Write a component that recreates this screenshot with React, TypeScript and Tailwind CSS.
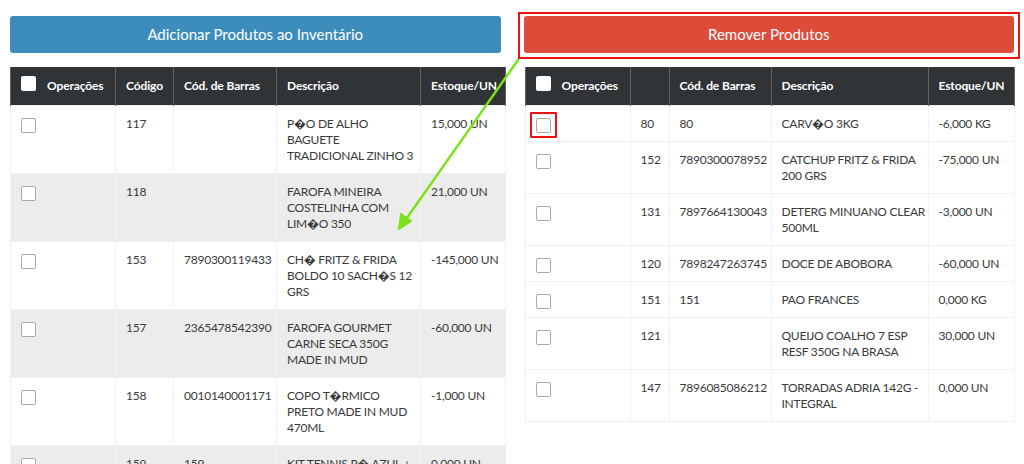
import React from 'react';

type Row = {
  codigo: string;
  barras: string;
  descricao: string[];
  estoque: string;
};

const inventario: Row[] = [
  { codigo: '117', barras: '', descricao: ['P�O DE ALHO', 'BAGUETE', 'TRADICIONAL ZINHO 3'], estoque: '15,000 UN' },
  { codigo: '118', barras: '', descricao: ['FAROFA MINEIRA', 'COSTELINHA COM', 'LIM�O 350'], estoque: '21,000 UN' },
  { codigo: '153', barras: '7890300119433', descricao: ['CH� FRITZ & FRIDA', 'BOLDO 10 SACH�S 12', 'GRS'], estoque: '-145,000 UN' },
  { codigo: '157', barras: '2365478542390', descricao: ['FAROFA GOURMET', 'CARNE SECA 350G', 'MADE IN MUD'], estoque: '-60,000 UN' },
  { codigo: '158', barras: '0010140001171', descricao: ['COPO T�RMICO', 'PRETO MADE IN MUD', '470ML'], estoque: '-1,000 UN' },
  { codigo: '159', barras: '159', descricao: ['KIT TENNIS P� AZUL +', 'BRANCO'], estoque: '0,000 UN' },
];

const remover: Row[] = [
  { codigo: '80', barras: '80', descricao: ['CARV�O 3KG'], estoque: '-6,000 KG' },
  { codigo: '152', barras: '7890300078952', descricao: ['CATCHUP FRITZ & FRIDA', '200 GRS'], estoque: '-75,000 UN' },
  { codigo: '131', barras: '7897664130043', descricao: ['DETERG MINUANO CLEAR', '500ML'], estoque: '-3,000 UN' },
  { codigo: '120', barras: '7898247263745', descricao: ['DOCE DE ABOBORA'], estoque: '-60,000 UN' },
  { codigo: '151', barras: '151', descricao: ['PAO FRANCES'], estoque: '0,000 KG' },
  { codigo: '121', barras: '', descricao: ['QUEIJO COALHO 7 ESP', 'RESF 350G NA BRASA'], estoque: '30,000 UN' },
  { codigo: '147', barras: '7896085086212', descricao: ['TORRADAS ADRIA 142G -', 'INTEGRAL'], estoque: '0,000 UN' },
];

const th =
  'border-x border-[#5f6265] px-[10px] text-left font-bold text-white text-[12px] tracking-[-0.01em] h-[38px] align-middle whitespace-nowrap';
const td = 'border border-[#f1f1f1] px-[10px] pt-[10px] pb-[9px] align-top whitespace-nowrap';

function Tabela({
  rows,
  striped,
  showCodigo,
  widths,
  tableWidth,
  marked,
}: {
  rows: Row[];
  striped: boolean;
  showCodigo: boolean;
  widths: string[];
  tableWidth: string;
  marked?: boolean;
}) {
  return (
    <table
      className={`${tableWidth} border-collapse table-fixed text-[12px] tracking-[-0.02em] leading-[16px] text-[#3a3a3a]`}
    >
      <thead>
        <tr className="bg-[#313437]">
          <th className={`${th} ${widths[0]}`}>
            <div className="flex items-center gap-[11px]">
              <span className="block w-[15px] h-[15px] bg-white rounded-[2px] -mt-[5px]" />
              <span>Operações</span>
            </div>
          </th>
          <th className={`${th} ${widths[1]}`}>{showCodigo ? 'Código' : ''}</th>
          <th className={`${th} ${widths[2]}`}>Cód. de Barras</th>
          <th className={`${th} ${widths[3]}`}>Descrição</th>
          <th className={`${th} ${widths[4]}`}>Estoque/UN</th>
        </tr>
      </thead>
      <tbody>
        {rows.map((r, i) => (
          <tr key={r.codigo} className={striped && i % 2 === 1 ? 'bg-[#ececec]' : 'bg-white'}>
            <td className={td}>
              <div className="relative h-[16px]">
                <span className="absolute left-0 top-[2px] w-[15px] h-[15px] bg-white border border-[#a9a9a9] rounded-[2px]" />
                {marked && i === 0 && (
                  <span className="absolute left-[-6px] top-[-4px] w-[27px] h-[26px] border-[2.5px] border-[#ee1111] rounded-[1px]" />
                )}
              </div>
            </td>
            <td className={td}>{r.codigo}</td>
            <td className={td}>{r.barras}</td>
            <td className={td}>
              {r.descricao.map((l) => (
                <div key={l}>{l}</div>
              ))}
            </td>
            <td className={td}>{r.estoque}</td>
          </tr>
        ))}
      </tbody>
    </table>
  );
}

export default function App() {
  return (
    <div
      className="relative w-[1024px] h-[464px] overflow-hidden bg-white px-[10px] pt-[16px]"
      style={{ fontFamily: 'Lato, "Noto Sans", sans-serif' }}
    >
      <div className="grid grid-cols-2 gap-[23px]">
        <div>
          <button className="w-full h-[37px] rounded-[3px] bg-[#3c8dbc] text-white text-[15px]">
            Adicionar Produtos ao Inventário
          </button>
          <div className="mt-[14px]">
            <Tabela
              rows={inventario}
              striped
              showCodigo
              tableWidth="w-[495px]"
              widths={['w-[105px]', 'w-[58px]', 'w-[103px]', 'w-[144px]', 'w-[85px]']}
            />
          </div>
        </div>
        <div>
          <div className="relative">
            <button className="w-full h-[37px] rounded-[3px] bg-[#dd4b39] text-white text-[15px]">
              Remover Produtos
            </button>
            <span className="absolute left-[-6px] right-[-6px] top-[-4px] bottom-[-6px] border-[2.5px] border-[#ee1111]" />
          </div>
          <div className="mt-[14px] ml-px">
            <Tabela
              rows={remover}
              striped={false}
              showCodigo={false}
              marked
              tableWidth="w-[489px]"
              widths={['w-[105px]', 'w-[39px]', 'w-[102px]', 'w-[157px]', 'w-[86px]']}
            />
          </div>
        </div>
      </div>

      <svg className="absolute left-0 top-0 pointer-events-none" width="1024" height="464">
        <line x1="518" y1="60" x2="402" y2="225" stroke="#7ee21a" strokeWidth="2.5" strokeLinecap="round" />
        <polygon points="399,229 401,214 411,221" fill="#7ee21a" stroke="#7ee21a" strokeWidth="2" strokeLinejoin="round" />
      </svg>
    </div>
  );
}
